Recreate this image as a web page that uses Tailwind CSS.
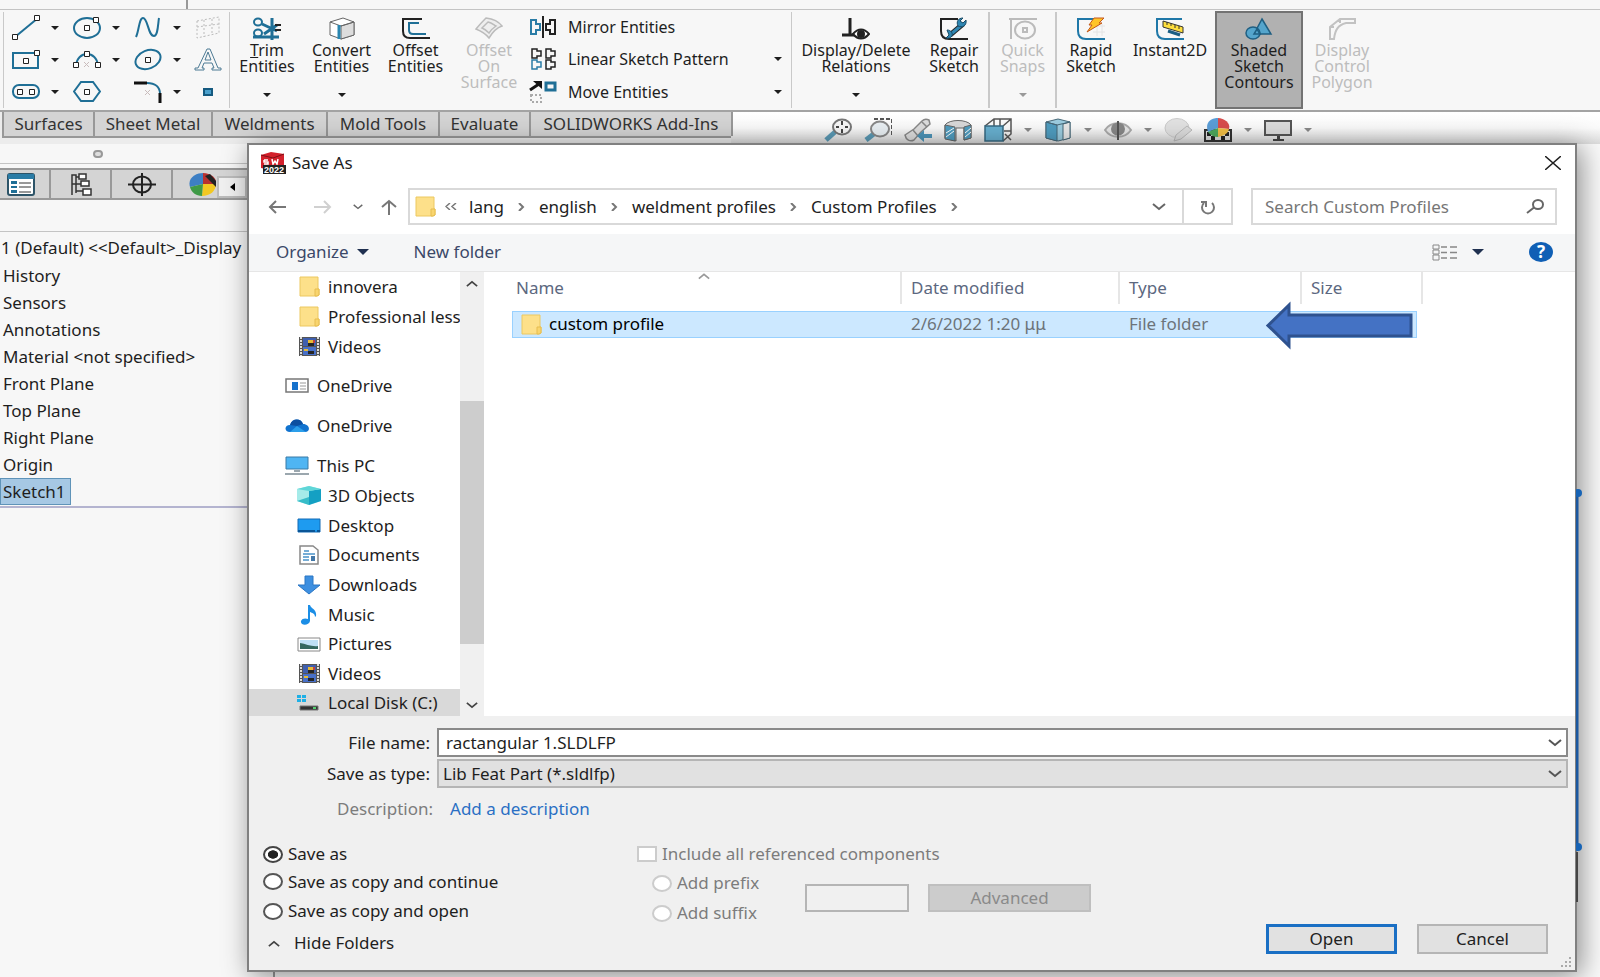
<!DOCTYPE html>
<html lang="en">
<head>
  <meta charset="UTF-8" />
  <meta name="viewport" content="width=device-width, initial-scale=1.0"/>
  <title>Save As</title>
  <script src="https://cdn.jsdelivr.net/npm/@tailwindcss/browser@4"></script>
</head>
<body class="relative h-screen overflow-hidden bg-[#f7f7f7] font-['Noto_Sans',sans-serif] text-base text-[#1e1e1e]">

  <!-- Shared icons -->
  <svg class="hidden">
    <symbol id="caret" viewBox="0 0 8 4"><path d="M0 0h8L4 4z" fill="currentColor"/></symbol>
    <symbol id="folder" viewBox="0 0 21 21"><path d="M1 1h18v12h1v6l-2 1H1z" fill="#fde08a" stroke="#ecc860"/><path d="M16 13h4v6l-2 1h-2z" fill="#f9d56e" stroke="#e6bd50"/></symbol>
    <symbol id="film" viewBox="0 0 21 19"><path d="M0 0h21v19H0z" fill="#555"/><path d="M2 0v19M19 0v19" stroke="#ddd" stroke-width="2" stroke-dasharray="2 1"/><path d="M4 1h13v8H4z" fill="#3f5fae"/><path d="M4 10h13v8H4z" fill="#4870c8"/><path d="M9 3h5v3h-5zM5 12h4v2H5z" fill="#e6bb35"/><path d="M9 6h6v3H9zM9 14h6v3H9z" fill="#252525"/><path d="M14 3h2v3h-2z" fill="#c04040"/></symbol>
    <symbol id="down" viewBox="0 0 14 8"><path d="M1 1l6 5 6-5" fill="none" stroke="currentColor" stroke-width="2"/></symbol>
    <symbol id="right" viewBox="0 0 7 8"><path d="M1 0l4 4-4 4" fill="none" stroke="currentColor" stroke-width="2"/></symbol>
  </svg>

  <!-- Title strip -->
  <div class="h-[10px] border-b border-[#c4c4c4]"><div class="ml-[186px] h-full w-[2px] bg-[#999]"></div></div>

  <!-- Ribbon -->
  <div class="flex h-[102px] border-b-2 border-[#a3a3a3] py-[1px] leading-4">
    <div class="my-[1px] ml-[3px] grid w-[227px] grid-cols-[61px_61px_60px_36px] grid-rows-[31px_33px_31px] items-center border-x border-[#c9c9c9] pl-2">
      <button aria-label="Line" class="flex items-center gap-[11px]"><svg class="h-[25px] w-7" viewBox="0 0 28 25" fill="#fff" stroke="#222"><path d="M3 22L26 3" stroke="#1f6f96" stroke-width="2"/><path d="M0.500 19.500h5v5h-5zM22.500 0.500h5v5h-5z"/></svg><svg class="h-1 w-2"><use href="#caret"/></svg></button>
      <button aria-label="Circle" class="flex items-center gap-[11px]"><svg class="h-[23px] w-7" viewBox="0 0 28 23" fill="none" stroke="#222"><ellipse cx="14" cy="12" rx="13" ry="10" stroke="#1f6f96" stroke-width="2"/><path d="M11.500 9.500h5v5h-5zM20.500 1.500h5v5h-5z" fill="#fff"/></svg><svg class="h-1 w-2"><use href="#caret"/></svg></button>
      <button aria-label="Spline" class="flex items-center gap-[11px]"><svg class="h-[23px] w-7" viewBox="0 0 28 23" fill="none" stroke="#1f6f96" stroke-width="2"><path d="M2 21C5 15 5 2 9 2c5 0 5 18 11 18 4 0 4-13 5-18"/></svg><svg class="h-1 w-2"><use href="#caret"/></svg></button>
      <button aria-label="Sketch picture" disabled><svg class="h-[23px] w-7" viewBox="0 0 28 23" fill="none" stroke="#bbb" stroke-dasharray="2 2"><path d="M3 5l22-4v16L3 22zM10 4v17M18 3v16M3 11l22-3"/></svg></button>

      <button aria-label="Rectangle" class="flex items-center gap-[11px]"><svg class="h-5 w-7" viewBox="0 0 28 20" fill="none" stroke="#222"><path d="M1 3h25v15H1z" stroke="#1f6f96" stroke-width="2"/><path d="M11.500 8.500h5v5h-5zM22.500 0.500h5v5h-5z" fill="#fff"/></svg><svg class="h-1 w-2"><use href="#caret"/></svg></button>
      <button aria-label="Arc" class="flex items-center gap-[11px]"><svg class="h-5 w-7" viewBox="0 0 28 20" fill="none" stroke="#222"><path d="M3 16C4 0 24 0 25 16" stroke="#1f6f96" stroke-width="2"/><path d="M11 12l5 5m0-5l-5 5" stroke="#c9bcbc"/><path d="M0.500 12.500h5v5h-5zM22.500 12.500h5v5h-5zM11.500 1.500h5v5h-5z" fill="#fff"/></svg><svg class="h-1 w-2"><use href="#caret"/></svg></button>
      <button aria-label="Ellipse" class="flex items-center gap-[11px]"><svg class="h-[23px] w-7" viewBox="0 0 28 23" fill="none" stroke="#222"><ellipse cx="14" cy="11.500" rx="13" ry="9" transform="rotate(-22 14 11.500)" stroke="#1f6f96" stroke-width="2"/><path d="M11.500 9.500h5v5h-5z" fill="#fff"/></svg><svg class="h-1 w-2"><use href="#caret"/></svg></button>
      <button aria-label="Text"><svg class="h-[23px] w-7" viewBox="0 0 28 23" fill="none" stroke="#4c7a94"><path d="M13 1h3l8 19h3v2h-9v-2h2l-2-5h-8l-2 5h2v2H1v-2h3zM11 12h6l-3-8z"/></svg></button>

      <button aria-label="Slot" class="flex items-center gap-[11px]"><svg class="h-[15px] w-7" viewBox="0 0 28 15" fill="none" stroke="#222"><rect x="1" y="1" width="26" height="13" rx="6" stroke="#1f6f96" stroke-width="2"/><path d="M5.500 5.500h5v5h-5zM17.500 5.500h5v5h-5z" fill="#fff"/></svg><svg class="h-1 w-2"><use href="#caret"/></svg></button>
      <button aria-label="Polygon"><svg class="h-[21px] w-7" viewBox="0 0 28 21" fill="none" stroke="#222"><path d="M8 1h12l7 9.500L20 20H8L1 10.500z" stroke="#1f6f96" stroke-width="2"/><path d="M11.500 8.500h5v5h-5z" fill="#fff"/></svg></button>
      <button aria-label="Fillet" class="flex items-center gap-[11px]"><svg class="h-[22px] w-7" viewBox="0 0 28 22" fill="none"><path d="M13 2c8 0 13 4 13 11" stroke="#1f6f96" stroke-width="2"/><path d="M0 2h13M26 12v10" stroke="#111" stroke-width="3"/><path d="M11 9l5 5m0-5l-5 5" stroke="#c9bcbc"/></svg><svg class="h-1 w-2"><use href="#caret"/></svg></button>
      <button aria-label="Point"><svg class="h-2 w-7" viewBox="0 0 28 8"><path d="M10 1h8v6h-8z" fill="#4aa0cc" stroke="#155a80" stroke-width="2"/></svg></button>
    </div>

    <button class="flex w-[74px] flex-col items-center pt-[6px]">
      <svg class="mb-[2px] h-[23px] w-7" viewBox="0 0 28 23" fill="none" stroke="#1f6f96" stroke-width="2"><path d="M19 1v22M0 20h26M24 8L11 17M24 14L9 7" stroke-width="3"/><path d="M28 8h-6m6 5h-6" stroke="#222"/><ellipse cx="5" cy="5" rx="4" ry="3.500"/><ellipse cx="5" cy="16" rx="4" ry="3.500"/></svg>
      <span><u>T</u>rim<br>Entities</span>
      <svg class="mt-[19px] h-1 w-2"><use href="#caret"/></svg>
    </button>
    <button class="flex w-[75px] flex-col items-center pt-[6px]">
      <svg class="mb-[2px] h-[23px] w-7" viewBox="0 0 28 23" fill="#fff" stroke="#666"><path d="M2 5l13-4 11 4v13l-13 4-11-4z"/><path d="M13 9l13-4v13l-13 4z" fill="#ddd"/><path d="M2 5l11 4 13-4" fill="none"/><path d="M11 8v14" stroke="#2a86b0" stroke-width="3"/></svg>
      <span>Convert<br>Entities</span>
      <svg class="mt-[19px] h-1 w-2"><use href="#caret"/></svg>
    </button>
    <button class="flex w-[73px] flex-col items-center pt-[6px]">
      <svg class="mb-[2px] h-[23px] w-7" viewBox="0 0 28 23" fill="none" stroke-width="2"><path d="M20 2H1v12c0 5 2 7 7 7h20" stroke="#222"/><path d="M17 6H7v7c0 3 1 4 4 4h13" stroke="#1f6f96"/></svg>
      <span>Offset<br>Entities</span>
    </button>
    <button disabled class="flex w-[74px] flex-col items-center pt-[6px] text-[#bdbdbd]">
      <svg class="mb-[2px] h-[23px] w-7" viewBox="0 0 28 23" fill="#eee" stroke="#bbb" stroke-width="1.500"><path d="M1 12C5 7 8 4 11 1c8 1 13 4 16 8-6 2-10 7-13 12-4-5-8-7-13-9z"/><path d="M7 11l6-6c4 1 6 3 8 4-3 2-5 4-7 7-2-2-4-4-7-5z"/></svg>
      <span>Offset<br>On<br>Surface</span>
    </button>

    <div class="my-[1px] grid w-[266px] grid-rows-[30px_34px_31px] items-center border-r border-[#c9c9c9] pr-[9px] pl-[3px]">
      <button class="flex items-center gap-[11px]"><svg class="h-[22px] w-7" viewBox="0 0 28 22" fill="none" stroke="#222" stroke-width="2"><path d="M2 4h5v4h4v6H7v4H2z" stroke="#2a7ca6"/><path d="M14 0v22M26 4h-5v4h-4v6h4v4h5z"/></svg>Mirror Entities</button>
      <button class="flex items-center gap-[11px]"><svg class="h-[22px] w-7" viewBox="0 0 28 22" fill="none" stroke="#222" stroke-width="1.500"><path d="M3 1h5v2h4v5H8v2H3zM17 1h5v2h4v5h-4v2h-5zM17 12h5v2h4v5h-4v2h-5z"/><path d="M3 12h5v2h4v5H8v2H3z" stroke="#2a7ca6"/></svg>Linear Sketch Pattern<svg class="ml-auto h-1 w-2"><use href="#caret"/></svg></button>
      <button class="flex items-center gap-[11px]"><svg class="h-[22px] w-7" viewBox="0 0 28 22" fill="none"><path d="M1 9l9-6" stroke="#111" stroke-width="3"/><path d="M4 0h9v8z" fill="#111"/><path d="M17 2h9v7h-9z" stroke="#1f6f96" stroke-width="3"/><path d="M2 14h10v7H2z" stroke="#aaa" stroke-width="2" stroke-dasharray="2 2"/></svg>Move Entities<svg class="ml-auto h-1 w-2"><use href="#caret"/></svg></button>
    </div>

    <button class="flex w-[128px] flex-col items-center pt-[6px]">
      <svg class="mb-[2px] h-[23px] w-7" viewBox="0 0 28 23" fill="none" stroke="#222" stroke-width="2"><path d="M8 1v17M0 18h13" stroke-width="3"/><path d="M11 17c5-6 11-6 16 0-5 6-11 6-16 0z" fill="#fff"/><circle cx="19" cy="17" r="3" fill="#222"/></svg>
      <span>Display/Delete<br>Relations</span>
      <svg class="mt-[19px] h-1 w-2"><use href="#caret"/></svg>
    </button>
    <button class="my-[1px] flex w-[70px] flex-col items-center border-r-2 border-[#c9c9c9] pt-[5px]">
      <svg class="mb-[2px] h-[23px] w-7" viewBox="0 0 28 23" fill="none" stroke="#222" stroke-width="2"><path d="M18 2H1v12c0 5 3 8 8 8h19"/><path d="M10 18L23 7" stroke-width="5"/><path d="M10 18L23 7" stroke="#2f86b2" stroke-width="3"/><path d="M26 3l-3 3-3-2 3-3c-5 0-7 4-5 8 4 2 9 0 8-6zM7 13c4 0 6 3 5 6-2 3-6 2-6 2l3-3z" fill="#2f86b2" stroke="#184b66" stroke-width="1"/></svg>
      <span>Repair<br>Sketch</span>
    </button>
    <button disabled class="my-[1px] flex w-[67px] flex-col items-center border-r-2 border-[#c9c9c9] pt-[5px] text-[#bdbdbd]">
      <svg class="mb-[2px] h-[23px] w-7" viewBox="0 0 28 23" fill="none" stroke="#bbb" stroke-width="2"><path d="M0 2h28M2 2v20"/><ellipse cx="16" cy="13" rx="10" ry="8.500"/><path d="M14 11h4v4h-4z"/></svg>
      <span>Quick<br>Snaps</span>
      <svg class="mt-[19px] h-1 w-2 text-[#999]"><use href="#caret"/></svg>
    </button>
    <button class="flex w-[68px] flex-col items-center pt-[6px]">
      <svg class="mb-[2px] h-[23px] w-7" viewBox="0 0 28 23" fill="none"><path d="M16 9h12M16 15h12M20 7v12M25 7v12" stroke="#e4e4e4"/><path d="M18 2H1v12c0 5 3 8 8 8h19" stroke="#1f78a8" stroke-width="2"/><path d="M17 1h10l-5 5h3L10 15l5-7h-3z" fill="#ffc428" stroke="#c4571a"/></svg>
      <span>Rapid<br>Sketch</span>
    </button>
    <button class="flex w-[90px] flex-col items-center pt-[6px]">
      <svg class="mb-[2px] h-[23px] w-7" viewBox="0 0 28 23" fill="none"><path d="M26 2H1v12c0 5 3 8 8 8h19" stroke="#1f78a8" stroke-width="2"/><path d="M7 4l20 6v6L7 10z" fill="#ffdf3d" stroke="#333"/><path d="M11 5v3M15 6v3M19 8v3M23 9v3" stroke="#333"/><path d="M12 14l12 4" stroke="#1b5e84" stroke-width="3"/></svg>
      <span>Instant2D</span>
    </button>
    <button class="flex w-[88px] flex-col items-center border-2 border-[#737373] bg-[#b1b1b1] pt-1">
      <svg class="mb-[2px] h-[23px] w-7" viewBox="0 0 28 23" fill="#55a5cc" stroke="#1f5f82" stroke-width="1.500"><path d="M17 2l9 15H9z"/><ellipse cx="8" cy="16" rx="7" ry="6"/><path d="M9 17h6l-3-5z"/></svg>
      <span>Shaded<br>Sketch<br>Contours</span>
    </button>
    <button disabled class="flex w-[78px] flex-col items-center pt-[6px] text-[#bdbdbd]">
      <svg class="mb-[2px] h-[23px] w-7" viewBox="0 0 28 23" fill="none" stroke="#c2c2c2" stroke-width="2"><path d="M2 22V10l10-8h15v4h-9C10 8 7 13 6 22zM2 10h4M12 2v4"/></svg>
      <span>Display<br>Control<br>Polygon</span>
    </button>
  </div>

  <!-- Command tabs and view toolbar -->
  <div class="flex h-8 bg-linear-to-b from-white via-[#fafafa] to-[#dcdcdc]">
    <div class="w-[731px] bg-[#ececec] text-[17px]">
      <div class="ml-[2px] grid h-[26px] grid-cols-[91px_118px_115px_112px_91px_202px] border-b-2 border-l-2 border-[#989898] bg-[#d4d4d4] leading-6 text-[#333]">
        <button class="border-r-2 border-[#989898]">Surfaces</button>
        <button class="border-r-2 border-[#989898]">Sheet Metal</button>
        <button class="border-r-2 border-[#989898]">Weldments</button>
        <button class="border-r-2 border-[#989898]">Mold Tools</button>
        <button class="border-r-2 border-[#989898]">Evaluate</button>
        <button class="border-r-2 border-[#989898]">SOLIDWORKS Add-Ins</button>
      </div>
    </div>
    <div class="ml-[93px] flex items-center gap-3 pt-1 text-[#888]">
      <svg class="h-6 w-7" viewBox="0 0 28 24" fill="none"><path d="M2 22l9-8" stroke="#5b9ab5" stroke-width="5"/><ellipse cx="18" cy="9" rx="9" ry="7.500" fill="#f6f6f6" stroke="#777" stroke-width="2"/><path d="M18 3v4M18 11v4M12 9h3M21 9h3" stroke="#444" stroke-width="2"/></svg>
      <svg class="h-6 w-7" viewBox="0 0 28 24" fill="none"><path d="M10 1h18v16" stroke="#555" stroke-width="2" stroke-dasharray="4 2"/><path d="M2 22l9-7" stroke="#5b9ab5" stroke-width="5"/><ellipse cx="16" cy="11" rx="9" ry="7.500" fill="#e9eff3" stroke="#888" stroke-width="2"/></svg>
      <svg class="h-6 w-7" viewBox="0 0 28 24"><path d="M1 17l9-6 8-8c2-2 5-2 7-1l1 4-9 8-7 8c-4 2-8 0-9-5z" fill="#ddd" stroke="#888" stroke-width="1.500"/><path d="M9 12l5 6M18 4l5 5" stroke="#888" stroke-width="1.500"/><path d="M13 18l7-6v4h8v4h-8v4z" fill="#4c94b8"/></svg>
      <svg class="h-6 w-7" viewBox="0 0 28 24" stroke="#666"><path d="M1 7c4-6 22-6 26 0v13l-7 2V10h-8v13L1 20z" fill="#d9d9d9"/><path d="M1 7l10 2v14L1 21zM20 9l7-2v13l-7 2z" fill="#4f9dc0"/><path d="M2 15l8-5M2 19l8-6M21 15l6-5M21 19l6-5" stroke="#fff"/></svg>
      <svg class="h-6 w-7" viewBox="0 0 28 24" fill="none" stroke="#555"><path d="M1 8l9-7h17v15l-8 7M10 1v7M19 8l8-7M20 13h7M16 1v7M21 16l6 6" stroke-width="1.500"/><path d="M1 8h18v15H1z" fill="#68b0d0" stroke="#376a82" stroke-width="1.500"/></svg>
      <svg class="h-1 w-2"><use href="#caret"/></svg>
      <svg class="h-6 w-7" viewBox="0 0 28 24" stroke="#476878"><path d="M2 4l12-3 12 3v16l-12 3-12-3z" fill="#9ccde0"/><path d="M2 4l11 3v16L2 20z" fill="#4f9dc0"/><path d="M19 6l7-2v16l-7 2z" fill="#e8e8e8"/><path d="M2 4l11 3 13-3" fill="none"/></svg>
      <svg class="h-1 w-2"><use href="#caret"/></svg>
      <svg class="h-6 w-7" viewBox="0 0 28 24" fill="none" stroke="#888" stroke-width="2"><path d="M1 12C7 3 21 3 27 12c-6 9-20 9-26 0z" fill="#e6e6e6" stroke="#aaa"/><ellipse cx="14" cy="11" rx="6" ry="5.500" fill="#888"/><path d="M14 3v19" stroke="#555"/></svg>
      <svg class="h-1 w-2"><use href="#caret"/></svg>
      <svg class="h-6 w-7" viewBox="0 0 28 24" stroke="#ccc"><ellipse cx="13" cy="10" rx="12" ry="9.500" fill="#e2e2e2"/><path d="M10 23l2-6L23 8l5 4-11 9z" fill="#ddd" stroke="#bbb"/></svg>
      <svg class="h-6 w-7" viewBox="0 0 28 24"><path d="M1 12h26v11H1z" fill="#ddd" stroke="#333" stroke-width="2"/><path d="M3 14h4v4H3zM7 18h4v4H7zM21 14h4v4h-4zM17 18h4v4h-4z" fill="#222"/><path d="M14 10L4 14C0 2 10 0 14 0z" fill="#5a9ed8"/><path d="M14 10V0c6 0 13 5 11 11z" fill="#d84d4d"/><path d="M14 10l11 1c-1 5-6 7-11 8z" fill="#f0bd45"/><path d="M14 10v9c-4 0-8-2-10-5z" fill="#4da85c"/></svg>
      <svg class="h-1 w-2"><use href="#caret"/></svg>
      <svg class="h-6 w-7" viewBox="0 0 28 24"><path d="M1 3h26v14H1z" fill="#dcdcdc" stroke="#555" stroke-width="2"/><path d="M13 18h3v3h4v2H9v-2h4z" fill="#444"/></svg>
      <svg class="h-1 w-2"><use href="#caret"/></svg>
    </div>
  </div>

  <!-- Feature manager -->
  <div class="flex h-[calc(100vh-144px)]">
    <aside class="w-[275px] shrink-0 border-r-2 border-[#999] text-[17px] whitespace-nowrap">
      <div class="flex h-5 items-center border-b border-[#c4c4c4] pl-[93px]"><span class="h-2 w-[10px] rounded-full border-2 border-[#999] bg-[#ddd]"></span></div>
      <div class="mt-1 flex h-8 border-y-2 border-[#999] bg-[#d4d4d4]">
        <button aria-label="FeatureManager" class="flex w-[51px] items-center border-r-2 border-[#999] pl-[7px]"><svg class="h-[23px] w-7" viewBox="0 0 28 23"><rect x="1" y="1" width="26" height="21" rx="2" fill="#fff" stroke="#2d5468" stroke-width="2"/><path d="M1 1h26v5H1z" fill="#2a7ca6"/><path d="M4 8h6v3H4zM4 13h6v2H4zM4 17h6v3H4z" fill="#1f6f96"/><path d="M12 10h12M12 14h12M12 19h12" stroke="#333"/></svg></button>
        <button aria-label="PropertyManager" class="flex w-[61px] items-center justify-center border-r-2 border-[#999]"><svg class="h-[23px] w-[22px]" viewBox="0 0 22 23" fill="#fff" stroke="#333" stroke-width="1.500"><path d="M2 22V2h4v18M2 11h10M6 4h5M6 18h8" fill="none"/><rect x="9" y="1" width="7" height="5"/><rect x="11" y="8" width="8" height="5"/><rect x="13" y="16" width="8" height="6"/></svg></button>
        <button aria-label="Origin" class="flex w-[61px] items-center justify-center border-r-2 border-[#999]"><svg class="h-[23px] w-7" viewBox="0 0 28 23" fill="none" stroke="#222" stroke-width="2"><ellipse cx="14" cy="11.500" rx="9" ry="8"/><path d="M14 0v23M0 11.500h28"/></svg></button>
        <button aria-label="Appearances" class="flex w-[44px] items-center justify-end"><svg class="h-[23px] w-7" viewBox="0 0 28 23"><path d="M14 11L1 14C-2 4 8 0 14 0z" fill="#3d7fc4"/><path d="M14 11V0c8 0 14 5 13 11z" fill="#b93030"/><path d="M14 11h13c0 7-6 12-14 12z" fill="#f2c822"/><path d="M14 11l-1 12C7 23 2 19 1 14z" fill="#3f9a47"/><path d="M16 3l5-2 6 7v6z" fill="#222"/></svg></button>
        <button aria-label="Collapse" class="mt-[6px] flex w-[30px] items-center justify-center border-2 border-[#bbb] bg-[#f0f0f0]"><svg class="h-2 w-[5px]" viewBox="0 0 5 8"><path d="M5 0v8L0 4z"/></svg></button>
      </div>
      <div class="h-8 border-b border-[#c4c4c4]"></div>
      <ul class="h-[276px] border-b-2 border-[#b4b4d0] pt-[2px] leading-[27px]">
        <li class="pl-[1px]">1 (Default) &lt;&lt;Default&gt;_Display</li>
        <li class="mt-[1px] pl-[3px]">History</li>
        <li class="pl-[3px]">Sensors</li>
        <li class="pl-[3px]">Annotations</li>
        <li class="pl-[3px]">Material &lt;not specified&gt;</li>
        <li class="pl-[3px]">Front Plane</li>
        <li class="pl-[3px]">Top Plane</li>
        <li class="pl-[3px]">Right Plane</li>
        <li class="pl-[3px]">Origin</li>
        <li class="w-[71px] border border-[#5f93b8] bg-[#a6c8e4] pl-[2px] leading-[25px]">Sketch1</li>
      </ul>
    </aside>
    <main class="grow bg-[#fafafa]"></main>
  </div>

  <!-- Sketch edge showing behind the dialog -->
  <svg class="absolute top-[488px] right-[16px] z-20 h-[414px] w-2" viewBox="0 0 8 414"><path d="M1 5v354" stroke="#1b58a0" stroke-width="3"/><path d="M1 364v50" stroke="#444" stroke-width="2"/><circle cx="2" cy="5" r="4" fill="#1763b5"/><circle cx="2" cy="359" r="4" fill="#1763b5"/></svg>

  <!-- Save As dialog -->
  <form class="absolute top-[143px] right-[23px] bottom-[5px] left-[247px] z-10 flex flex-col border-2 border-[#808080] bg-white text-[17px] leading-6 shadow-[4px_4px_26px_rgba(0,0,0,0.45)]" onsubmit="return false">
    <div class="flex h-[37px] items-center pr-[14px] pl-[11px]">
      <svg class="h-[22px] w-[26px]" viewBox="0 0 26 22"><path d="M1 3l10-3 13 2v12l-8 5L1 16z" fill="#d3202b"/><path d="M1 3l12 3 11-4" stroke="#7d1016" fill="none"/><path d="M4 8h4M4 8v2h4v2H4M12 7l1 5 2-3 2 3 1-5" stroke="#fff" fill="none" stroke-width="1.500"/><path d="M3 13h23v9H3z" fill="#222"/><text x="4" y="21" font-family="Liberation Sans" font-weight="bold" font-size="9" fill="#fff">2022</text></svg>
      <h1 class="ml-[6px]">Save As</h1>
      <button type="button" aria-label="Close" class="ml-auto"><svg class="h-[14px] w-4" viewBox="0 0 16 14"><path d="M0 0l16 14M16 0L0 14" stroke="#222" stroke-width="1.500"/></svg></button>
    </div>

    <!-- Address bar -->
    <div class="mb-[2px] flex h-[50px] items-center pr-[18px] pl-[19px] text-[#666]">
      <button type="button" aria-label="Back"><svg class="h-[14px] w-[18px]" viewBox="0 0 18 14" fill="none" stroke="#777" stroke-width="2"><path d="M18 7H2M8 1L2 7l6 6"/></svg></button>
      <button type="button" aria-label="Forward" class="ml-7"><svg class="h-[14px] w-[18px]" viewBox="0 0 18 14" fill="none" stroke="#d0d0d0" stroke-width="2"><path d="M0 7h16M10 1l6 6-6 6"/></svg></button>
      <button type="button" aria-label="Recent" class="ml-[21px]"><svg class="h-[6px] w-[10px]"><use href="#down"/></svg></button>
      <button type="button" aria-label="Up" class="ml-[17px]"><svg class="h-4 w-[18px]" viewBox="0 0 18 16" fill="none" stroke="#777" stroke-width="2"><path d="M9 16V2M2 8l7-6 7 6"/></svg></button>
      <div class="ml-[10px] flex h-[37px] grow items-center border-2 border-[#d9d9d9] pl-[5px]">
        <svg class="h-[21px] w-[21px]"><use href="#folder"/></svg>
        <svg class="ml-[9px] h-[7px] w-3" viewBox="0 0 12 7" fill="none" stroke="#777" stroke-width="1.500"><path d="M5 0L1 3.500 5 7M11 0L7 3.500 11 7"/></svg>
        <nav class="ml-3 flex items-center gap-[14px] text-[#222]">
          <a href="#">lang</a><svg class="h-2 w-[7px] text-[#777]"><use href="#right"/></svg>
          <a href="#">english</a><svg class="h-2 w-[7px] text-[#777]"><use href="#right"/></svg>
          <a href="#">weldment profiles</a><svg class="h-2 w-[7px] text-[#777]"><use href="#right"/></svg>
          <a href="#">Custom Profiles</a><svg class="h-2 w-[7px] text-[#777]"><use href="#right"/></svg>
        </nav>
        <button type="button" aria-label="Previous locations" class="mr-4 ml-auto"><svg class="h-2 w-[14px]"><use href="#down"/></svg></button>
        <button type="button" aria-label="Refresh" class="flex h-full w-[49px] items-center justify-center border-l-2 border-[#d9d9d9]"><svg class="h-4 w-4" viewBox="0 0 16 16" fill="none" stroke="#777" stroke-width="2"><path d="M12 4a6 6 0 1 1-8 0"/><path d="M1 3h5v5" /></svg></button>
      </div>
      <label class="ml-[18px] flex h-[37px] w-[306px] items-center border-2 border-[#d9d9d9] pr-[11px] pl-3">
        <input type="search" aria-label="Search Custom Profiles" placeholder="Search Custom Profiles" class="w-full min-w-0 outline-none placeholder:text-[#767676]" />
        <svg class="h-[15px] w-[18px] shrink-0" viewBox="0 0 18 15" fill="none" stroke="#666" stroke-width="2"><ellipse cx="12" cy="5.500" rx="5" ry="4.500"/><path d="M8 8.500L1 14"/></svg>
      </label>
    </div>

    <!-- Command bar -->
    <div class="flex h-[38px] items-center border-b border-[#e6e6e6] bg-[#f5f6f7] pr-[22px] pl-[27px] text-[#3b4868]">
      <button type="button" class="flex items-center gap-2">Organize <svg class="h-[6px] w-3 text-[#1f3050]"><use href="#caret"/></svg></button>
      <button type="button" class="ml-[45px]">New folder</button>
      <button type="button" aria-label="Change view" class="ml-auto flex items-center gap-[14px]"><svg class="h-[17px] w-[26px]" viewBox="0 0 26 17" fill="none" stroke="#888"><path d="M1 1h6v4H1zM1 6h6v4H1zM1 11h6v5H1z"/><path d="M9 3h6M18 3h7M9 8.500h6M18 8.500h7M9 14h6M18 14h7" stroke-width="1.500"/></svg><svg class="h-[6px] w-3 text-[#1f3050]"><use href="#caret"/></svg></button>
      <button type="button" aria-label="Help" class="ml-[45px] h-5 w-6 rounded-[50%] bg-[#0f5fb5] font-bold leading-5 text-white">?</button>
    </div>

    <div class="flex min-h-0 grow">
      <!-- Folder tree -->
      <ul class="w-[211px] shrink-0 overflow-hidden whitespace-nowrap">
        <li class="flex h-[30px] items-center gap-2 pl-[50px]"><svg class="h-[21px] w-[21px]"><use href="#folder"/></svg>innovera</li>
        <li class="flex h-[30px] items-center gap-2 pl-[50px]"><svg class="h-[21px] w-[21px] shrink-0"><use href="#folder"/></svg>Professional less</li>
        <li class="mb-[9px] flex h-[30px] items-center gap-2 pl-[50px]"><svg class="h-[19px] w-[21px]"><use href="#film"/></svg>Videos</li>
        <li class="mb-[10px] flex h-[30px] items-center gap-2 pl-9"><svg class="h-[15px] w-6" viewBox="0 0 24 15"><path d="M1 1h22v13H1z" fill="#fff" stroke="#777" stroke-width="1.500"/><path d="M7 4h6v8H7z" fill="#1772cc"/><path d="M15 5h6M15 8h6M15 11h6" stroke="#999"/></svg>OneDrive</li>
        <li class="mb-[10px] flex h-[30px] items-center gap-2 pl-9"><svg class="h-[14px] w-6" viewBox="0 0 24 14"><path d="M5 13C-1 13-1 6 5 6 7-1 16-1 18 5c7 0 8 8 2 8z" fill="#1173cf"/><path d="M5 13l7-6 9 6z" fill="#2c9fea"/><path d="M5 6C7-1 16-1 18 5l-6 2z" fill="#0c4fa0"/></svg>OneDrive</li>
        <li class="flex h-[30px] items-center gap-2 pl-9"><svg class="h-[19px] w-6" viewBox="0 0 24 19"><path d="M1 1h22v12H1z" fill="#4fb5f3" stroke="#3a7ba6"/><path d="M9 15h6M0 18h24" stroke="#7b8a94" stroke-width="1.500"/></svg>This PC</li>
        <li class="flex h-[30px] items-center gap-[7px] pl-12"><svg class="h-[19px] w-6" viewBox="0 0 24 19"><path d="M0 3l12-3 12 3v12l-12 4-12-4z" fill="#a5ebe9"/><path d="M12 5l12-2v12l-12 4z" fill="#14a0c3"/><path d="M0 3l12-3 12 3-12 2z" fill="#5fd6d8"/><path d="M0 15l12-4v8z" fill="#37bcc8"/></svg>3D Objects</li>
        <li class="flex h-[30px] items-center gap-[7px] pl-12"><svg class="h-[15px] w-6" viewBox="0 0 24 15"><path d="M1 1h22v13H1z" fill="#1e9bf0" stroke="#136ab5"/><path d="M1 13h17m2 0h3" stroke="#0a5596" stroke-width="2"/></svg>Desktop</li>
        <li class="flex h-[29px] items-center gap-2 pl-[50px]"><svg class="h-5 w-[21px]" viewBox="0 0 21 20"><path d="M1 1h13l5 4v14H1z" fill="#fff" stroke="#888" stroke-width="1.500"/><path d="M4 9h12M4 12h6M4 15h6M5 6h5" stroke="#4a93c9" stroke-width="1.500"/><path d="M12 11h4v5h-4z" fill="#4378a8"/></svg>Documents</li>
        <li class="flex h-[30px] items-center gap-[7px] pl-12"><svg class="h-5 w-6" viewBox="0 0 24 20"><path d="M8 1h8v9h7L12 19 1 10h7z" fill="#3d8fe0" stroke="#2a76c4"/></svg>Downloads</li>
        <li class="flex h-[30px] items-center gap-[7px] pl-12"><svg class="h-5 w-6" viewBox="0 0 24 20"><path d="M11 0h2c1 4 7 4 6 11l-1 1c0-4-3-4-5-5v9c-1 5-10 5-9 0 1-3 5-3 7-2z" fill="#1b8ee6"/></svg>Music</li>
        <li class="flex h-[29px] items-center gap-[7px] pl-12"><svg class="h-[15px] w-6" viewBox="0 0 24 15"><path d="M1 1h22v13H1z" fill="#fff" stroke="#888"/><path d="M3 3h18v9H3z" fill="#bfe0f5"/><path d="M3 6c6 1 12 4 18 3v3H3z" fill="#35685f"/></svg>Pictures</li>
        <li class="flex h-[30px] items-center gap-2 pl-[50px]"><svg class="h-[19px] w-[21px]"><use href="#film"/></svg>Videos</li>
        <li class="flex h-7 items-center gap-[7px] bg-[#d9d9d9] pl-12"><svg class="h-4 w-6" viewBox="0 0 24 16"><path d="M0 0h4v3H0zM5 0h4v3H5zM0 4h4v3H0zM5 4h4v3H5z" fill="#1fb0e6"/><path d="M3 11h18v4H3z" fill="#333" stroke="#777"/><path d="M16 13h3" stroke="#53d06e" stroke-width="2"/></svg>Local Disk (C:)</li>
      </ul>
      <!-- Scrollbar -->
      <div class="flex w-6 shrink-0 flex-col items-center bg-[#f0f0f0] text-[#444]">
        <svg class="mt-2 h-[7px] w-3 rotate-180"><use href="#down"/></svg>
        <div class="mt-[114px] h-[243px] w-full bg-[#cdcdcd]"></div>
        <svg class="mt-auto mb-[7px] h-[7px] w-3"><use href="#down"/></svg>
      </div>

      <!-- File list -->
      <div class="relative grow pl-7">
        <svg class="absolute top-0 left-[214px] h-2 w-3 rotate-180 text-[#999]"><use href="#down"/></svg>
        <table class="w-[911px] table-fixed border-separate border-spacing-0 text-left">
          <thead class="text-[#5c6880]">
            <tr class="h-8">
              <th class="w-[390px] border-r-2 border-[#e6e6e6] pl-1 font-normal">Name</th>
              <th class="w-[218px] border-r-2 border-[#e6e6e6] pl-[9px] font-normal">Date modified</th>
              <th class="w-[182px] border-r-2 border-[#e6e6e6] pl-[9px] font-normal">Type</th>
              <th class="border-r-2 border-[#e6e6e6] pl-[9px] font-normal">Size</th>
            </tr>
          </thead>
          <tbody>
            <tr class="h-[7px]"><td colspan="4"></td></tr>
            <tr class="h-[27px] text-[#6d747a]">
              <td class="border-y border-l border-[#99d1ff] bg-[#cce8ff] p-0 text-black"><div class="flex items-center gap-[7px] pl-2"><svg class="h-[21px] w-[21px]"><use href="#folder"/></svg>custom profile</div></td>
              <td class="border-y border-[#99d1ff] bg-[#cce8ff] py-0 pl-[9px]">2/6/2022 1:20 μμ</td>
              <td class="border-y border-[#99d1ff] bg-[#cce8ff] py-0 pl-[9px]">File folder</td>
              <td class="p-0"><div class="mr-[6px] h-[27px] border-y border-r border-[#99d1ff] bg-[#cce8ff]"></div></td>
            </tr>
          </tbody>
        </table>
        <svg class="absolute top-[29px] left-[782px] h-[49px] w-[147px]" viewBox="0 0 147 49"><path d="M2 24.500L23 4v10h122v21H23v10z" fill="#4472c4" stroke="#2f528f" stroke-width="3"/></svg>
      </div>
    </div>

    <!-- Save options -->
    <div class="h-[254px] shrink-0 bg-[#f0f0f0] pt-3 pr-[7px]">
      <div class="grid grid-cols-[181px_1fr] gap-x-[7px] gap-y-[2px]">
        <label for="fileName" class="self-center text-right">File name:</label>
        <div class="relative">
          <input id="fileName" type="text" value="ractangular 1.SLDLFP" class="block h-[29px] w-full border-2 border-[#8a8a8a] bg-white px-[7px] outline-none" />
          <svg class="absolute top-[11px] right-[6px] h-2 w-[14px] text-[#555]"><use href="#down"/></svg>
        </div>
        <label for="fileType" class="self-center text-right">Save as type:</label>
        <div class="relative">
          <select id="fileType" class="block h-[29px] w-full appearance-none border-2 border-[#b5b5b5] bg-[#e1e1e1] px-1"><option>Lib Feat Part (*.sldlfp)</option></select>
          <svg class="absolute top-[11px] right-[6px] h-2 w-[14px] text-[#555]"><use href="#down"/></svg>
        </div>
      </div>
      <div class="mt-[9px] flex h-6 items-center gap-[17px] pl-[88px]"><span class="text-[#7c7c7c]">Description:</span><a href="#" class="text-[#2a6fc4]">Add a description</a></div>

      <div class="mt-[19px] flex">
        <div class="w-[374px] pl-[14px]">
          <label class="flex h-7 items-center gap-[5px]"><input type="radio" name="mode" checked class="h-[17px] w-5 appearance-none rounded-[50%] border-2 border-[#444] bg-white checked:bg-[radial-gradient(closest-side,#222_60%,#fff_68%)]" />Save as</label>
          <label class="flex h-[27px] items-center gap-[5px]"><input type="radio" name="mode" class="h-[17px] w-5 appearance-none rounded-[50%] border-2 border-[#555] bg-white" />Save as copy and continue</label>
          <label class="mt-[2px] flex h-7 items-center gap-[5px]"><input type="radio" name="mode" class="h-[17px] w-5 appearance-none rounded-[50%] border-2 border-[#555] bg-white" />Save as copy and open</label>
          <button type="button" class="mt-1 flex h-7 items-center gap-[14px] pl-[5px]"><svg class="h-[7px] w-3 rotate-180 text-[#444]"><use href="#down"/></svg>Hide Folders</button>
        </div>
        <div class="grow text-[#7c7c7c]">
          <label class="flex h-7 items-center gap-[5px] pl-[14px]"><input type="checkbox" disabled class="h-4 w-5 appearance-none border-2 border-[#ccc] bg-white" />Include all referenced components</label>
          <div class="flex items-center pl-[29px]">
            <div class="w-[153px]">
              <label class="flex h-[30px] items-center gap-[5px]"><input type="radio" name="affix" disabled class="h-[17px] w-5 appearance-none rounded-[50%] border-2 border-[#ccc] bg-white" />Add prefix</label>
              <label class="flex h-[30px] items-center gap-[5px]"><input type="radio" name="affix" disabled class="h-[17px] w-5 appearance-none rounded-[50%] border-2 border-[#ccc] bg-white" />Add suffix</label>
            </div>
            <input type="text" aria-label="Prefix or suffix" disabled class="h-7 w-[104px] border-2 border-[#b5b5b5] bg-[#f0f0f0]" />
            <button type="button" disabled class="ml-[19px] h-7 w-[163px] border-2 border-[#bfbfbf] bg-[#cccccc] text-[#8a8a8a]">Advanced</button>
          </div>
          <div class="-mt-1 flex justify-end gap-5 pr-5 text-[#222]">
            <button type="submit" class="h-[30px] w-[131px] border-3 border-[#1a6fc4] bg-[#e1e1e1]">Open</button>
            <button type="button" class="h-[30px] w-[131px] border-2 border-[#b5b5b5] bg-[#e1e1e1]">Cancel</button>
          </div>
        </div>
      </div>
    </div>
    <svg class="absolute right-[3px] bottom-[2px] h-[11px] w-3" viewBox="0 0 12 11"><path d="M9 0h2v2H9zM9 4h2v2H9zM5 4h2v2H5zM9 8h2v2H9zM5 8h2v2H5zM1 8h2v2H1z" fill="#aaa"/></svg>
  </form>

</body>
</html>
